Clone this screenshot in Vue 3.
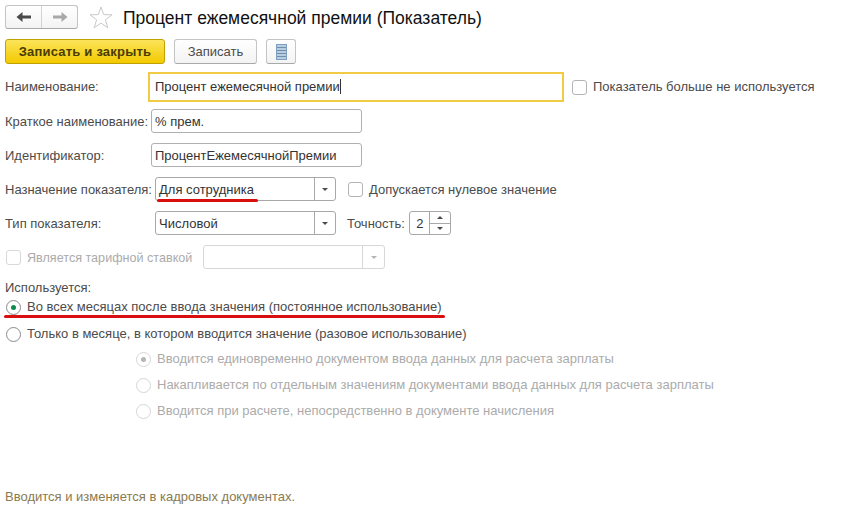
<script setup>
const subOptions = [
  { text: 'Вводится единовременно документом ввода данных для расчета зарплаты', on: true },
  { text: 'Накапливается по отдельным значениям документами ввода данных для расчета зарплаты', on: false },
  { text: 'Вводится при расчете, непосредственно в документе начисления', on: false },
]
</script>

<template>
  <div class="page">
    <header class="head">
      <div class="nav">
        <button class="nav-btn">
          <svg width="16" height="12" viewBox="0 0 16 12"><path d="M0.5 6 L6.5 1 V4.5 H15 V7.5 H6.5 V11 Z" fill="#4a4a4a"/></svg>
        </button>
        <button class="nav-btn">
          <svg width="16" height="12" viewBox="0 0 16 12"><path d="M15.5 6 L9.5 1 V4.5 H1 V7.5 H9.5 V11 Z" fill="#a8a8a8"/></svg>
        </button>
      </div>
      <svg class="star" width="24" height="23" viewBox="0 0 24 23"><path d="M12 1 L14.7 8.6 L23 8.8 L16.4 13.8 L18.8 21.8 L12 17.1 L5.2 21.8 L7.6 13.8 L1 8.8 L9.3 8.6 Z" fill="#fff" stroke="#c9c9c9" stroke-width="1"/></svg>
      <h1 class="title">Процент ежемесячной премии (Показатель)</h1>
    </header>

    <div class="toolbar">
      <button class="btn primary">Записать и закрыть</button>
      <button class="btn plain">Записать</button>
      <button class="btn icon">
        <svg width="11" height="16" viewBox="0 0 11 16">
          <rect x="0.5" y="0.5" width="10" height="15" fill="#b9cde0" stroke="#7f9fbd"/>
          <path d="M1 3.5H10M1 6.5H10M1 9.5H10M1 12.5H10" stroke="#6f8fae" stroke-width="1"/>
        </svg>
      </button>
    </div>

    <div class="row r-name">
      <span class="label">Наименование:</span>
      <div class="field focus"><span class="caret">Процент ежемесячной премии</span></div>
      <span class="check c-name"></span>
      <span class="text">Показатель больше не используется</span>
    </div>

    <div class="row r-short low">
      <span class="label">Краткое наименование:</span>
      <div class="field short">% прем.</div>
    </div>

    <div class="row r-id low">
      <span class="label">Идентификатор:</span>
      <div class="field short">ПроцентЕжемесячнойПремии</div>
    </div>

    <div class="row r-dest low">
      <span class="label wide">Назначение показателя:</span>
      <div class="combo">
        <span class="combo-text">Для сотрудника</span>
        <span class="combo-arrow"><i class="tri"></i></span>
        <span class="red red-a"></span>
      </div>
      <span class="check c-zero"></span>
      <span class="text">Допускается нулевое значение</span>
    </div>

    <div class="row r-type low">
      <span class="label wide">Тип показателя:</span>
      <div class="combo">
        <span class="combo-text">Числовой</span>
        <span class="combo-arrow"><i class="tri"></i></span>
      </div>
      <span class="text prec">Точность:</span>
      <div class="spin">
        <span class="spin-val">2</span>
        <span class="spin-btns">
          <span class="spin-btn"><i class="tri up"></i></span>
          <span class="spin-btn"><i class="tri"></i></span>
        </span>
      </div>
    </div>

    <div class="row r-tariff low">
      <span class="check off c-tariff"></span>
      <span class="text off t-tariff">Является тарифной ставкой</span>
      <div class="combo off c-off">
        <span class="combo-text"></span>
        <span class="combo-arrow"><i class="tri"></i></span>
      </div>
    </div>

    <div class="used">Используется:</div>

    <div class="radio-row first">
      <span class="radio on"></span>
      <span class="text">Во всех месяцах после ввода значения (постоянное использование)</span>
      <span class="red red-b"></span>
    </div>
    <div class="radio-row second">
      <span class="radio"></span>
      <span class="text">Только в месяце, в котором вводится значение (разовое использование)</span>
    </div>

    <div class="subs">
      <div v-for="o in subOptions" :key="o.text" class="radio-row sub">
        <span class="radio off" :class="{ on: o.on }"></span>
        <span class="text off">{{ o.text }}</span>
      </div>
    </div>

    <footer class="foot">Вводится и изменяется в кадровых документах.</footer>
  </div>
</template>

<style scoped>
.page {
  width: 857px;
  height: 517px;
  box-sizing: border-box;
  padding: 5px 0 0 5px;
  background: #fff;
  color: #4b4b4b;
  font: 13px/16px "Liberation Sans", Arial, sans-serif;
  overflow: hidden;
}
.head { display: flex; align-items: center; height: 24px; }
.nav {
  display: flex;
  flex: none;
  width: 73px;
  height: 24px;
  box-sizing: border-box;
  border: 1px solid #c4c4c4;
  border-bottom-color: #a9a9a9;
  border-radius: 3px;
  background: linear-gradient(#fff, #f3f3f3);
}
.nav-btn {
  flex: 1;
  display: flex;
  align-items: center;
  justify-content: center;
  padding: 0;
  border: 0;
  background: none;
}
.nav-btn + .nav-btn { border-left: 1px solid #d2d2d2; }
.star { margin-left: 11px; flex: none; }
.title {
  margin: 2px 0 0 10px;
  font-size: 17.5px;
  font-weight: 400;
  line-height: 24px;
  color: #111;
  white-space: nowrap;
}
.toolbar { display: flex; margin-top: 10px; height: 25px; }
.btn {
  box-sizing: border-box;
  height: 25px;
  padding: 0;
  border-radius: 3px;
  font: inherit;
  display: flex;
  align-items: center;
  justify-content: center;
  color: #4b4b4b;
}
.primary {
  width: 160px;
  border: 1px solid #bfa200;
  background: linear-gradient(#fbe45a, #f3c900);
  color: #4a3c00;
  font-weight: 700;
  font-size: 13px;
  letter-spacing: 0.2px;
}
.plain, .icon {
  border: 1px solid #c4c4c4;
  border-bottom-color: #a9a9a9;
  background: linear-gradient(#fff, #f3f3f3);
}
.plain { width: 83px; margin-left: 9px; }
.icon { width: 30px; margin-left: 9px; }

.row { display: flex; align-items: center; white-space: nowrap; }
.label { width: 146px; flex: none; }
.wide { width: 150px; }
.r-name { margin-top: 8px; height: 30px; }
.r-short { margin-top: 7px; height: 24px; }
.r-id { margin-top: 10px; height: 24px; }
.r-dest { margin-top: 10px; height: 24px; }
.r-type { margin-top: 10px; height: 24px; }
.r-tariff { margin-top: 10px; height: 24px; }
.low .label, .low .text { padding-top: 2px; }

.field {
  box-sizing: border-box;
  height: 24px;
  line-height: 24px;
  padding-left: 3px;
  border: 1px solid #b0b0b0;
  border-radius: 3px;
  color: #333;
}
.short { width: 211px; }
.focus {
  width: 416px;
  height: 30px;
  margin-left: -3px;
  line-height: 26px;
  padding-left: 5px;
  border: 2px solid #f2cb45;
  border-radius: 0;
}
.caret { border-right: 1px solid #333; display: inline-block; line-height: 15px; margin-top: 1px; }
.combo {
  position: relative;
  box-sizing: border-box;
  display: flex;
  flex: none;
  width: 181px;
  height: 24px;
  border: 1px solid #a8a8a8;
  border-radius: 3px;
}
.combo-text { flex: 1; padding-left: 3px; line-height: 24px; color: #333; }
.combo-arrow {
  width: 20px;
  display: flex;
  align-items: center;
  justify-content: center;
  border-left: 1px solid #a8a8a8;
}
.tri {
  width: 0;
  height: 0;
  border-left: 3px solid transparent;
  border-right: 3px solid transparent;
  border-top: 3px solid #4b4b4b;
}
.tri.up { border-top: 0; border-bottom: 3px solid #4b4b4b; }
.check {
  flex: none;
  box-sizing: border-box;
  width: 15px;
  height: 15px;
  border: 1px solid #b4b4b4;
  border-radius: 3px;
}
.c-name { margin: 0 6px 0 8px; }
.c-zero { margin: 0 6px 0 12px; }
.c-tariff { margin: 0 6px 0 1px; }
.prec { margin-left: 11px; }
.spin {
  box-sizing: border-box;
  display: flex;
  flex: none;
  width: 42px;
  height: 24px;
  margin-left: 4px;
  border: 1px solid #a8a8a8;
  border-radius: 3px;
}
.spin-val { width: 19px; text-align: center; line-height: 24px; color: #333; padding-left: 1px; box-sizing: border-box; }
.spin-btns { flex: 1; display: flex; flex-direction: column; border-left: 1px solid #a8a8a8; }
.spin-btn { flex: 1; display: flex; align-items: center; justify-content: center; }
.spin-btn + .spin-btn { border-top: 1px solid #a8a8a8; }
.off { color: #ababab; border-color: #d8d8d8; }
.c-off { width: 182px; margin-left: 10px; }
.c-off .combo-arrow { border-left-color: #d8d8d8; width: 21px; }
.c-off .tri { border-top-color: #b5b5b5; }
.t-tariff { width: 166px; flex: none; font-size: 12.6px; }

.used { margin-top: 11px; height: 16px; }
.radio-row {
  position: relative;
  display: flex;
  align-items: center;
  height: 16px;
  white-space: nowrap;
}
.first { margin-top: 3px; }
.second { margin-top: 11px; }
.radio {
  flex: none;
  box-sizing: border-box;
  position: relative;
  width: 15px;
  height: 15px;
  margin: 0 6px 0 1px;
  border: 1px solid #8a8a8a;
  border-radius: 50%;
}
.radio.on::after {
  content: "";
  position: absolute;
  left: 4px;
  top: 4px;
  width: 5px;
  height: 5px;
  border-radius: 50%;
  background: #0f8a4a;
}
.radio.off { border-color: #d6d6d6; }
.radio.off.on::after { background: #b5b5b5; }
.subs { padding-left: 130px; margin-top: 9px; display: flex; flex-direction: column; gap: 10px; }
.red { position: absolute; background: #d90f0f; height: 3px; border-radius: 2px; }
.red-a { left: 1px; top: 21px; width: 101px; }
.red-b { left: -1px; top: 16px; width: 441px; }
.foot { margin-top: 70px; color: #8a7a50; }
</style>
